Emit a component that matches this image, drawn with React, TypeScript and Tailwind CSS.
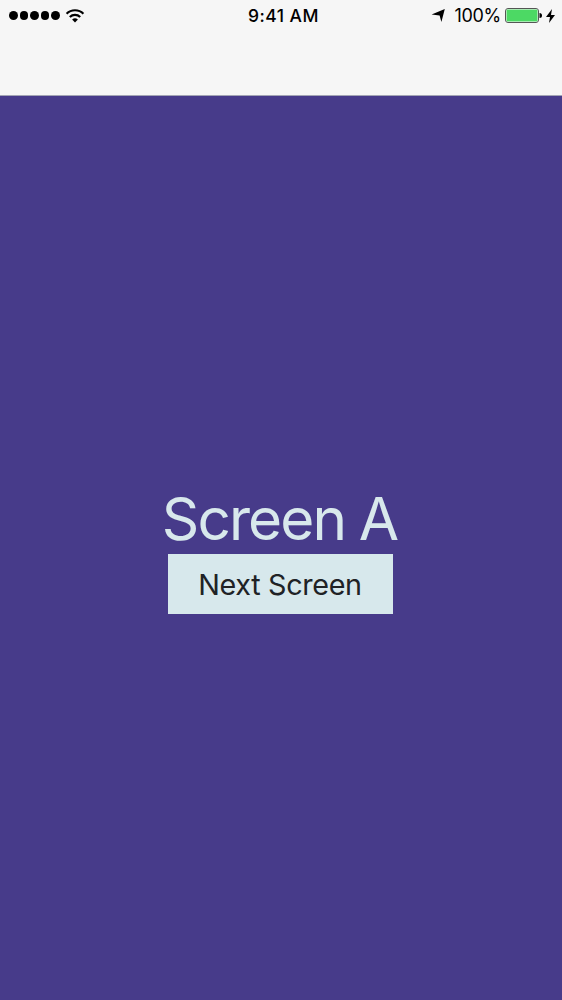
export default function App() {
  return (
    <div className="flex h-[1000px] w-[562px] flex-col overflow-hidden bg-[#473b8a] font-['Inter',sans-serif]">
      <header className="h-24 border-b border-[#a3a5b5] bg-[#f6f6f6] text-black">
        <div className="grid h-[31px] grid-cols-3 items-center">
          <div className="flex items-center gap-[5px] pl-[9px]">
            <div className="flex gap-[2px]">
              {[0, 1, 2, 3, 4].map((dot) => (
                <span key={dot} className="size-[8.6px] rounded-full bg-black" />
              ))}
            </div>
            <svg width="20" height="14" viewBox="0 0 20 14" fill="none" stroke="black" strokeWidth="2.2">
              <path d="M1.6 4.7a12 12 0 0 1 16.8 0M4.8 8a7.5 7.5 0 0 1 10.4 0" />
              <path d="M10 13.5 7.1 10.6a4.1 4.1 0 0 1 5.8 0Z" fill="black" stroke="none" />
            </svg>
          </div>
          <span className="pl-[5px] text-center text-[17.5px] font-medium leading-none tracking-[0.45px] whitespace-nowrap">9:41 AM</span>
          <div className="flex items-center justify-end pr-[7px]">
            <svg width="14" height="13" viewBox="0 0 14 13" className="mr-[9px]"><path d="M13.8 0 10.4 13 8.6 6.6 .6 5.4Z" /></svg>
            <span className="mr-[4px] text-[18px] leading-none tracking-[-0.3px]">100%</span>
            <svg width="37" height="15" viewBox="0 0 37 15"><rect x=".5" y=".5" width="33" height="14" rx="2.5" fill="white" stroke="#555" /><rect x="1.5" y="1.5" width="31" height="12" rx="1" fill="#4cd964" /><path d="M34.5 5q2.5 0 2.5 2.5T34.5 10Z" /></svg>
            <svg width="9" height="14" viewBox="0 0 9 14" className="ml-1"><path d="M6 0 0 8h4l-1 6 6-8H5Z" /></svg>
          </div>
        </div>
      </header>
      <main className="flex flex-1 flex-col items-center pt-[390px] pr-px">
        <h1 className="h-[68px] pr-[2px] text-[58.5px] font-normal leading-[65px] tracking-[-1.9px] [word-spacing:-1px] text-[#d8e8ec]">Screen A</h1>
        <button className="h-[60px] w-[225px] bg-[#d7e8ec] pt-[2px] pr-[1px] text-[28.75px] tracking-[-0.35px] text-[#202225]">Next Screen</button>
      </main>
    </div>
  );
}
